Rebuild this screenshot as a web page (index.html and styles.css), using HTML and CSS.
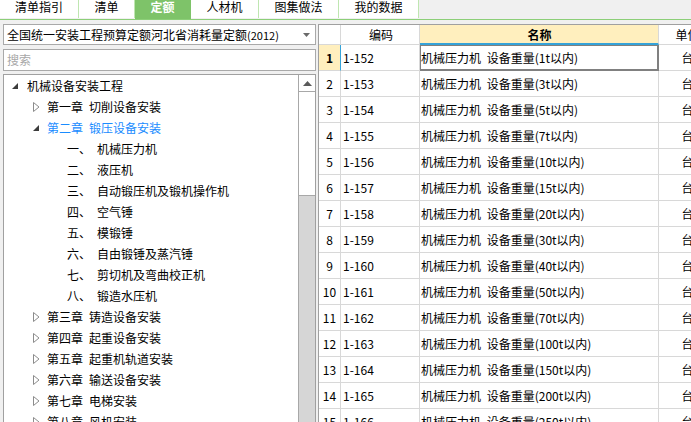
FILE: index.html
```html
<!DOCTYPE html>
<html lang="zh-CN">
<head>
<meta charset="utf-8">
<title>定额</title>
<link rel="stylesheet" href="styles.css">
</head>
<body>
<div class="tabs">
  <div class="tab w79">清单指引</div>
  <div class="tab w56">清单</div>
  <div class="tab w56 active">定额</div>
  <div class="tab w68">人材机</div>
  <div class="tab w80">图集做法</div>
  <div class="tab w80">我的数据</div>
</div>
<div class="main">
  <div class="left">
    <div class="combo">
      <span class="combo-text">全国统一安装工程预算定额河北省消耗量定额<span class="year">(2012)</span></span>
      <svg class="caret" width="7" height="4" viewBox="0 0 7 4"><polygon points="0,0 7,0 3.5,4" fill="#6a6a6a"/></svg>
    </div>
    <div class="search">搜索</div>
    <div class="tree">
      <div class="tree-list">
        <div class="node l0"><span class="exp"><svg width="6" height="6" viewBox="0 0 6 6"><polygon points="6,0 6,6 0,6" fill="#3c3c3c"/></svg></span><span>机械设备安装工程</span></div>
        <div class="node l1"><span class="exp"><svg width="7" height="10" viewBox="0 0 7 10"><polygon points="0.5,0.5 6,5 0.5,9.5" fill="#fff" stroke="#8c8c8c"/></svg></span><span>第一章</span><span class="gap">切削设备安装</span></div>
        <div class="node l1 sel"><span class="exp"><svg width="6" height="6" viewBox="0 0 6 6"><polygon points="6,0 6,6 0,6" fill="#3c3c3c"/></svg></span><span>第二章</span><span class="gap">锻压设备安装</span></div>
        <div class="node l2"><span>一、</span><span class="gap">机械压力机</span></div>
        <div class="node l2"><span>二、</span><span class="gap">液压机</span></div>
        <div class="node l2"><span>三、</span><span class="gap">自动锻压机及锻机操作机</span></div>
        <div class="node l2"><span>四、</span><span class="gap">空气锤</span></div>
        <div class="node l2"><span>五、</span><span class="gap">模锻锤</span></div>
        <div class="node l2"><span>六、</span><span class="gap">自由锻锤及蒸汽锤</span></div>
        <div class="node l2"><span>七、</span><span class="gap">剪切机及弯曲校正机</span></div>
        <div class="node l2"><span>八、</span><span class="gap">锻造水压机</span></div>
        <div class="node l1"><span class="exp"><svg width="7" height="10" viewBox="0 0 7 10"><polygon points="0.5,0.5 6,5 0.5,9.5" fill="#fff" stroke="#8c8c8c"/></svg></span><span>第三章</span><span class="gap">铸造设备安装</span></div>
        <div class="node l1"><span class="exp"><svg width="7" height="10" viewBox="0 0 7 10"><polygon points="0.5,0.5 6,5 0.5,9.5" fill="#fff" stroke="#8c8c8c"/></svg></span><span>第四章</span><span class="gap">起重设备安装</span></div>
        <div class="node l1"><span class="exp"><svg width="7" height="10" viewBox="0 0 7 10"><polygon points="0.5,0.5 6,5 0.5,9.5" fill="#fff" stroke="#8c8c8c"/></svg></span><span>第五章</span><span class="gap">起重机轨道安装</span></div>
        <div class="node l1"><span class="exp"><svg width="7" height="10" viewBox="0 0 7 10"><polygon points="0.5,0.5 6,5 0.5,9.5" fill="#fff" stroke="#8c8c8c"/></svg></span><span>第六章</span><span class="gap">输送设备安装</span></div>
        <div class="node l1"><span class="exp"><svg width="7" height="10" viewBox="0 0 7 10"><polygon points="0.5,0.5 6,5 0.5,9.5" fill="#fff" stroke="#8c8c8c"/></svg></span><span>第七章</span><span class="gap">电梯安装</span></div>
        <div class="node l1"><span class="exp"><svg width="7" height="10" viewBox="0 0 7 10"><polygon points="0.5,0.5 6,5 0.5,9.5" fill="#fff" stroke="#8c8c8c"/></svg></span><span>第八章</span><span class="gap">风机安装</span></div>
      </div>
      <div class="sb">
        <div class="sb-btn"><svg width="9" height="5" viewBox="0 0 9 5"><polygon points="4.5,0 9,5 0,5" fill="#5a5a5a"/></svg></div>
        <div class="sb-thumb"></div>
      </div>
    </div>
  </div>
  <div class="grid">
    <div class="row head">
      <div class="c num"></div>
      <div class="c code center">编码</div>
      <div class="c name center selcol">名称</div>
      <div class="c unit center">单位</div>
    </div>
    <div class="row">
      <div class="c num cur">1</div>
      <div class="c code">1-152</div>
      <div class="c name focus">机械压力机 设备重量(1t以内)</div>
      <div class="c unit center">台</div>
    </div>
    <div class="row"><div class="c num">2</div><div class="c code">1-153</div><div class="c name">机械压力机 设备重量(3t以内)</div><div class="c unit center">台</div></div>
    <div class="row"><div class="c num">3</div><div class="c code">1-154</div><div class="c name">机械压力机 设备重量(5t以内)</div><div class="c unit center">台</div></div>
    <div class="row"><div class="c num">4</div><div class="c code">1-155</div><div class="c name">机械压力机 设备重量(7t以内)</div><div class="c unit center">台</div></div>
    <div class="row"><div class="c num">5</div><div class="c code">1-156</div><div class="c name">机械压力机 设备重量(10t以内)</div><div class="c unit center">台</div></div>
    <div class="row"><div class="c num">6</div><div class="c code">1-157</div><div class="c name">机械压力机 设备重量(15t以内)</div><div class="c unit center">台</div></div>
    <div class="row"><div class="c num">7</div><div class="c code">1-158</div><div class="c name">机械压力机 设备重量(20t以内)</div><div class="c unit center">台</div></div>
    <div class="row"><div class="c num">8</div><div class="c code">1-159</div><div class="c name">机械压力机 设备重量(30t以内)</div><div class="c unit center">台</div></div>
    <div class="row"><div class="c num">9</div><div class="c code">1-160</div><div class="c name">机械压力机 设备重量(40t以内)</div><div class="c unit center">台</div></div>
    <div class="row"><div class="c num">10</div><div class="c code">1-161</div><div class="c name">机械压力机 设备重量(50t以内)</div><div class="c unit center">台</div></div>
    <div class="row"><div class="c num">11</div><div class="c code">1-162</div><div class="c name">机械压力机 设备重量(70t以内)</div><div class="c unit center">台</div></div>
    <div class="row"><div class="c num">12</div><div class="c code">1-163</div><div class="c name">机械压力机 设备重量(100t以内)</div><div class="c unit center">台</div></div>
    <div class="row"><div class="c num">13</div><div class="c code">1-164</div><div class="c name">机械压力机 设备重量(150t以内)</div><div class="c unit center">台</div></div>
    <div class="row"><div class="c num">14</div><div class="c code">1-165</div><div class="c name">机械压力机 设备重量(200t以内)</div><div class="c unit center">台</div></div>
    <div class="row"><div class="c num">15</div><div class="c code">1-166</div><div class="c name">机械压力机 设备重量(250t以内)</div><div class="c unit center">台</div></div>
  </div>
</div>
</body>
</html>
```

FILE: styles.css
```css
* { box-sizing: border-box; }
html, body {
  margin: 0;
  width: 691px;
  height: 422px;
  overflow: hidden;
}
body {
  background: #f0f0f0;
  font-family: "Noto Sans CJK SC", "Noto Sans", sans-serif;
  font-size: 12px;
  color: #000;
}

/* tabs */
.tabs {
  display: flex;
  align-items: flex-start;
  height: 20px;
  border-bottom: 1px solid #8ccf78;
}
.tab {
  height: 18px;
  line-height: 13px;
  text-align: center;
  background: #fff;
  border-right: 1px solid #bfe6b1;
  white-space: nowrap;
}
.tab.active {
  height: 19px;
  background: #7ec369;
  color: #fff;
  font-weight: bold;
  border-right-color: #7ec369;
}
.w79 { width: 79px; }
.w56 { width: 56px; }
.w68 { width: 68px; }
.w80 { width: 80px; }

/* layout */
.main {
  display: flex;
  gap: 2px;
  padding: 4px 0 0 3px;
  height: 402px;
}
.left {
  width: 313px;
  flex: none;
  display: flex;
  flex-direction: column;
}

.combo {
  height: 21px;
  background: #fff;
  border: 1px solid #a9a9a9;
  display: flex;
  align-items: center;
  padding: 0 5px 0 3px;
  white-space: nowrap;
}
.combo-text { flex: 1; line-height: 19px; }
.year { font-size: 11px; }
.caret { flex: none; }

.search {
  margin-top: 4px;
  height: 22px;
  background: #fff;
  border: 1px solid #a9a9a9;
  padding-left: 3px;
  line-height: 20px;
  color: #a8a8a8;
}

.tree {
  margin-top: 3px;
  flex: 1;
  background: #fff;
  border: 1px solid #a0a0a0;
  border-bottom: none;
  display: flex;
  overflow: hidden;
}
.tree-list {
  flex: 1;
  padding-left: 4px;
}
.node {
  height: 21px;
  display: flex;
  align-items: center;
  white-space: nowrap;
  line-height: 21px;
}
.node.l0 { padding-left: 0; }
.node.l1 { padding-left: 20px; }
.node.l2 { padding-left: 59px; }
.exp {
  width: 19px;
  flex: none;
  display: flex;
  align-items: center;
  padding-left: 5px;
}
.node.l0 .exp { padding-left: 4px; }
.gap { margin-left: 6px; }
.node.sel { color: #1a8cff; }

.sb {
  width: 17px;
  flex: none;
  background: #d6d6d6;
  border-left: 1px solid #a8a8a8;
  display: flex;
  flex-direction: column;
}
.sb-btn {
  height: 17px;
  background: #fff;
  border-bottom: 1px solid #a8a8a8;
  display: flex;
  align-items: center;
  justify-content: center;
}
.sb-thumb {
  height: 104px;
  background: #fff;
  border-bottom: 1px solid #a8a8a8;
}

/* grid */
.grid {
  flex: 1;
  background: #fff;
  border-left: 1px solid #a0a0a0;
  border-top: 1px solid #a0a0a0;
  overflow: hidden;
}
.row {
  display: grid;
  grid-template-columns: 22px 79px 239px 58px 40px;
  height: 26px;
}
.row.head { height: 20px; }
.c {
  border-right: 1px solid #d8d8d8;
  border-bottom: 1px solid #d8d8d8;
  display: flex;
  align-items: center;
  white-space: nowrap;
  overflow: hidden;
}
.center { justify-content: center; }
.num { justify-content: center; }
.code { padding-left: 2px; }
.name { padding-left: 1px; word-spacing: 3px; }
.head .c { background: #fff; }
.head .selcol {
  background: #ffefbe;
  font-weight: bold;
  border-bottom: 2px solid #35a3d9;
}
.num.cur {
  background: #ffefbe;
  font-weight: bold;
  border-right: 1px solid #35a3d9;
}
.focus {
  border-right: 1px solid #808080;
  border-bottom: 1px solid #808080;
  box-shadow: inset 0 0 0 1px #808080;
}
```
